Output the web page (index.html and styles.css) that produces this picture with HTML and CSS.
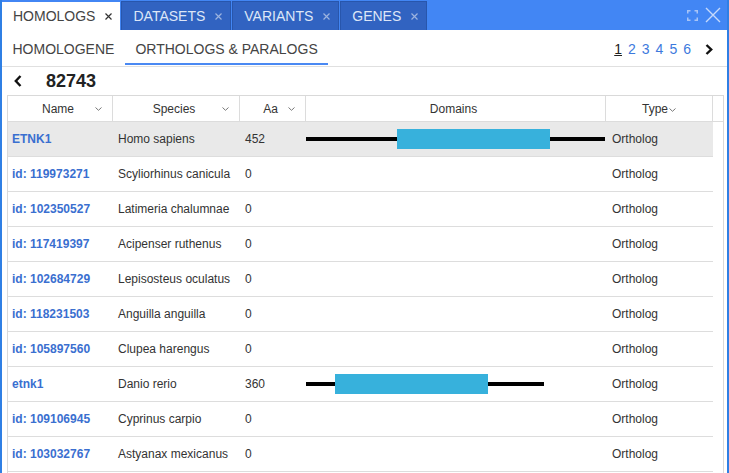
FILE: index.html
```html
<!DOCTYPE html>
<html>
<head>
<meta charset="utf-8">
<link rel="stylesheet" href="styles.css">
</head>
<body>
<div class="panel">
  <div class="topbar">
    <div class="tabs">
      <div class="tab active"><span>HOMOLOGS</span><svg class="x" width="7" height="7" viewBox="0 0 7 7"><path d="M0.5 0.5L6.5 6.5M6.5 0.5L0.5 6.5"/></svg></div>
      <div class="tab"><span>DATASETS</span><svg class="x" width="7" height="7" viewBox="0 0 7 7"><path d="M0.5 0.5L6.5 6.5M6.5 0.5L0.5 6.5"/></svg></div>
      <div class="tab"><span>VARIANTS</span><svg class="x" width="7" height="7" viewBox="0 0 7 7"><path d="M0.5 0.5L6.5 6.5M6.5 0.5L0.5 6.5"/></svg></div>
      <div class="tab"><span>GENES</span><svg class="x" width="7" height="7" viewBox="0 0 7 7"><path d="M0.5 0.5L6.5 6.5M6.5 0.5L0.5 6.5"/></svg></div>
    </div>
    <div class="win-icons">
      <svg class="max" width="11" height="11" viewBox="0 0 11 11"><path d="M0.75 3.5V0.75H3.5M7.5 0.75H10.25V3.5M10.25 7.5V10.25H7.5M3.5 10.25H0.75V7.5"/></svg>
      <svg class="close" width="16" height="16" viewBox="0 0 16 16"><path d="M1 1L15 15M15 1L1 15"/></svg>
    </div>
  </div>

  <div class="subbar">
    <div class="subtabs">
      <div class="subtab">HOMOLOGENE</div>
      <div class="subtab active">ORTHOLOGS &amp; PARALOGS</div>
    </div>
    <div class="pager">
      <span class="pg current">1</span><span class="pg">2</span><span class="pg">3</span><span class="pg">4</span><span class="pg">5</span><span class="pg">6</span>
      <svg class="next" width="8" height="11" viewBox="0 0 8 11"><path d="M1.5 1L6.2 5.5L1.5 10"/></svg>
    </div>
  </div>

  <div class="titlerow">
    <svg class="back" width="8" height="12" viewBox="0 0 8 12"><path d="M6.5 1L1.8 6L6.5 11"/></svg>
    <span class="gid">82743</span>
  </div>

  <div class="table">
    <div class="thead">
      <div class="th sortable">Name<svg class="chev" width="7" height="4" viewBox="0 0 7 4"><path d="M0.5 0.5L3.5 3.3L6.5 0.5"/></svg></div>
      <div class="th sortable">Species<svg class="chev" width="7" height="4" viewBox="0 0 7 4"><path d="M0.5 0.5L3.5 3.3L6.5 0.5"/></svg></div>
      <div class="th sortable">Aa<svg class="chev" width="7" height="4" viewBox="0 0 7 4"><path d="M0.5 0.5L3.5 3.3L6.5 0.5"/></svg></div>
      <div class="th">Domains</div>
      <div class="th type">Type<svg class="chev inline" width="7" height="4" viewBox="0 0 7 4"><path d="M0.5 0.5L3.5 3.3L6.5 0.5"/></svg></div>
      <div class="th filler"></div>
    </div>
    <div class="tbody">
      <div class="tr selected">
        <div class="td name">ETNK1</div><div class="td sp">Homo sapiens</div><div class="td aa">452</div>
        <div class="td domcell"><div class="track" style="width:299px"><span class="dom" style="left:91px;width:153px"></span></div></div>
        <div class="td type">Ortholog</div>
      </div>
      <div class="tr">
        <div class="td name">id: 119973271</div><div class="td sp">Scyliorhinus canicula</div><div class="td aa">0</div>
        <div class="td domcell"></div><div class="td type">Ortholog</div>
      </div>
      <div class="tr">
        <div class="td name">id: 102350527</div><div class="td sp">Latimeria chalumnae</div><div class="td aa">0</div>
        <div class="td domcell"></div><div class="td type">Ortholog</div>
      </div>
      <div class="tr">
        <div class="td name">id: 117419397</div><div class="td sp">Acipenser ruthenus</div><div class="td aa">0</div>
        <div class="td domcell"></div><div class="td type">Ortholog</div>
      </div>
      <div class="tr">
        <div class="td name">id: 102684729</div><div class="td sp">Lepisosteus oculatus</div><div class="td aa">0</div>
        <div class="td domcell"></div><div class="td type">Ortholog</div>
      </div>
      <div class="tr">
        <div class="td name">id: 118231503</div><div class="td sp">Anguilla anguilla</div><div class="td aa">0</div>
        <div class="td domcell"></div><div class="td type">Ortholog</div>
      </div>
      <div class="tr">
        <div class="td name">id: 105897560</div><div class="td sp">Clupea harengus</div><div class="td aa">0</div>
        <div class="td domcell"></div><div class="td type">Ortholog</div>
      </div>
      <div class="tr">
        <div class="td name">etnk1</div><div class="td sp">Danio rerio</div><div class="td aa">360</div>
        <div class="td domcell"><div class="track" style="width:238px"><span class="dom" style="left:29px;width:153px"></span></div></div>
        <div class="td type">Ortholog</div>
      </div>
      <div class="tr">
        <div class="td name">id: 109106945</div><div class="td sp">Cyprinus carpio</div><div class="td aa">0</div>
        <div class="td domcell"></div><div class="td type">Ortholog</div>
      </div>
      <div class="tr">
        <div class="td name">id: 103032767</div><div class="td sp">Astyanax mexicanus</div><div class="td aa">0</div>
        <div class="td domcell"></div><div class="td type">Ortholog</div>
      </div>
    </div>
  </div>
</div>
</body>
</html>
```

FILE: styles.css
```css
html, body {
  margin: 0;
  padding: 0;
  height: 100%;
  overflow: hidden;
  background: #fff;
}

body {
  font-family: "Liberation Sans", Arial, sans-serif;
  color: #333;
}

.panel {
  height: 473px;
  box-sizing: border-box;
  border-left: 2px solid #2f7fe4;
  border-right: 2px solid #2f7fe4;
  display: flex;
  flex-direction: column;
  overflow: hidden;
}

/* ---------- top tab bar ---------- */
.topbar {
  flex: 0 0 30px;
  height: 30px;
  background: #4286f4;
  display: flex;
  align-items: flex-start;
}

.tabs {
  display: flex;
  gap: 1px;
}

.tab {
  box-sizing: border-box;
  height: 29px;
  margin-top: 1px;
  padding: 0 8px 0 11px;
  display: flex;
  align-items: center;
  gap: 10px;
  font-size: 14px;
  color: #dde6f7;
  background: #3163c1;
  border: 1px solid #2856ac;
  border-bottom: none;
}

.tab .x path {
  stroke: #9cb3df;
  stroke-width: 1.2;
  fill: none;
}

.tab.active {
  height: 28px;
  margin-top: 2px;
  padding: 0 8px 0 11px;
  background: #fff;
  color: #444;
  border: none;
}

.tab.active .x path {
  stroke: #333;
}

.win-icons {
  margin-left: auto;
  display: flex;
  align-items: center;
  gap: 7px;
  height: 30px;
  padding-right: 6px;
}

.win-icons .max path {
  stroke: #a8c4f6;
  stroke-width: 1.5;
  fill: none;
}

.win-icons .close path {
  stroke: #c6d9fb;
  stroke-width: 1.4;
  fill: none;
}

/* ---------- sub tabs ---------- */
.subbar {
  flex: 0 0 36px;
  height: 36px;
  border-bottom: 1px solid #e0e0e0;
  display: flex;
  justify-content: space-between;
}

.subtabs {
  display: flex;
}

.subtab {
  box-sizing: border-box;
  height: 35px;
  padding: 5px 10.5px 0;
  display: flex;
  align-items: center;
  font-size: 14px;
  color: #444;
  border-bottom: 2px solid transparent;
}

.subtab.active {
  border-bottom-color: #4a89f3;
}

.pager {
  display: flex;
  align-items: center;
  padding: 2px 14px 0 0;
  font-size: 14px;
}

.pg {
  color: #3d79dd;
  margin-right: 6px;
}

.pg.current {
  color: #222;
  text-decoration: underline;
}

.pager .next {
  margin-left: 8px;
}

.pager .next path {
  stroke: #111;
  stroke-width: 2.4;
  fill: none;
}

/* ---------- title row ---------- */
.titlerow {
  flex: 0 0 28px;
  height: 28px;
  display: flex;
  align-items: center;
  padding-left: 12px;
}

.titlerow .back path {
  stroke: #111;
  stroke-width: 2.4;
  fill: none;
}

.gid {
  margin-left: 24px;
  font-size: 18px;
  font-weight: bold;
  color: #222;
}

/* ---------- table ---------- */
.table {
  flex: 1;
  margin: 0 3px 0 5px;
  border: 1px solid #d9d9d9;
  border-bottom: none;
  overflow: hidden;
}

.thead {
  display: grid;
  grid-template-columns: 105px 127px 66px 300px 107px 10px;
  height: 26px;
  box-sizing: border-box;
  border-bottom: 1px solid #dcdcdc;
}

.th {
  position: relative;
  box-sizing: border-box;
  border-right: 1px solid #dcdcdc;
  display: flex;
  align-items: center;
  justify-content: center;
  font-size: 12px;
  color: #333;
  padding-right: 4px;
}

.th.type {
  padding-right: 0;
}

.th.filler {
  border-right: none;
}

.chev path {
  stroke: #777;
  stroke-width: 1;
  fill: none;
}

.th.sortable .chev {
  position: absolute;
  right: 10px;
  top: 11px;
}

.chev.inline {
  margin-left: 1px;
  margin-top: 2px;
}

.tr {
  display: grid;
  grid-template-columns: 105px 127px 66px 300px 107px;
  width: 705px;
  height: 35px;
  box-sizing: border-box;
  border-bottom: 1px solid #dddddd;
}

.tr.selected {
  background: #e9e9e9;
}

.td {
  display: flex;
  align-items: center;
  font-size: 12px;
  color: #333;
  white-space: nowrap;
  overflow: hidden;
}

.td.name {
  padding-left: 4px;
  font-weight: bold;
  color: #3a6fd0;
}

.td.sp,
.td.aa {
  padding-left: 5px;
}

.td.type {
  padding-left: 6px;
}

.td.domcell {
  overflow: visible;
}

.track {
  position: relative;
  height: 4px;
  background: #000;
}

.dom {
  position: absolute;
  top: -8px;
  height: 20px;
  background: #37b1dc;
}
```
